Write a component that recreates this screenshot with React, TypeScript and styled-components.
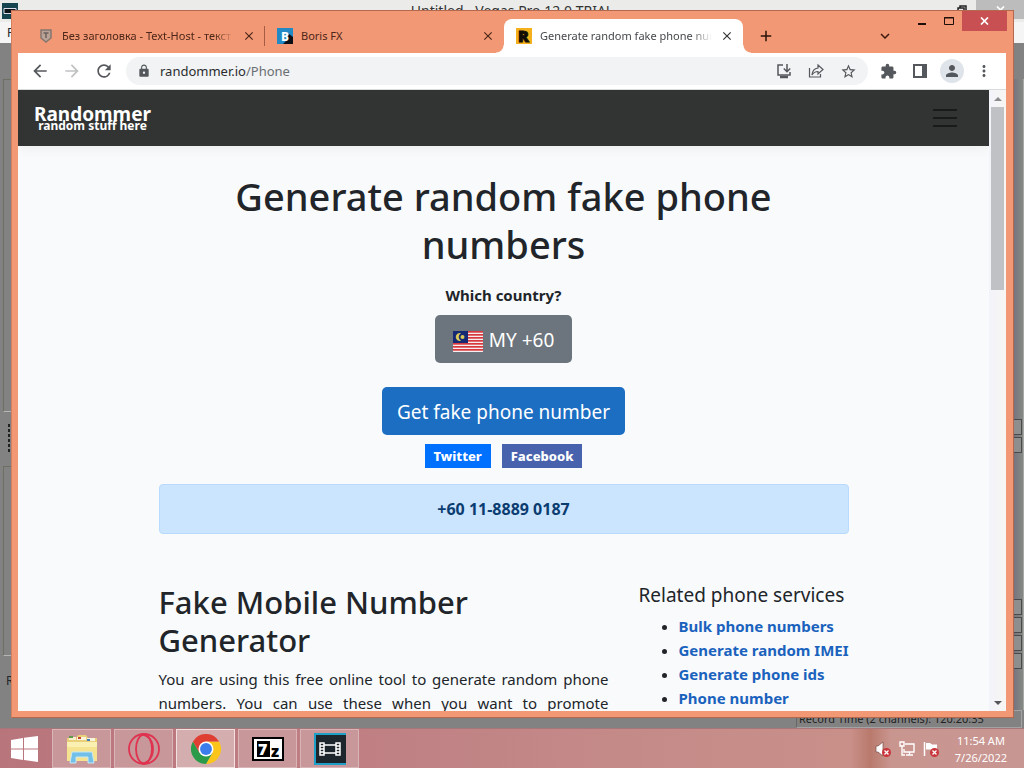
import React from "react";
import styled, { createGlobalStyle } from "styled-components";
import {
  MdArrowBack,
  MdArrowForward,
  MdRefresh,
  MdLock,
  MdStarBorder,
  MdExtension,
  MdPerson,
  MdMoreVert,
  MdAdd,
  MdClose,
  MdKeyboardArrowDown,
} from "react-icons/md";

const GlobalStyle = createGlobalStyle`
  *, *::before, *::after { box-sizing: border-box; }
  html, body, #root { height: 100%; }
  body {
    margin: 0;
    overflow: hidden;
    font-family: "Noto Sans", "Open Sans", sans-serif;
    color: #212529;
  }
  button { font-family: inherit; border: 0; padding: 0; margin: 0; background: none; color: inherit; }
`;

const Desktop = styled.div`
  height: 100vh;
  display: flex;
  flex-direction: column;
`;

const Workspace = styled.div`
  position: relative;
  flex: 1;
  min-height: 0;
  display: flex;
`;

/* ---------- editor window in the background ---------- */

const Editor = styled.div`
  flex: 1;
  min-width: 0;
  display: flex;
  flex-direction: column;
  background: #828282;
  overflow: hidden;
`;

const EditorTitle = styled.div`
  flex: none;
  height: 22px;
  display: grid;
  grid-template-columns: 1fr auto 1fr;
  align-items: center;
  background: #ebebea;
  color: #333;
  font-size: 14px;
  line-height: 22px;
`;

const EditorLogo = styled.svg`
  margin-left: 2px;
`;

const EditorControls = styled.div`
  display: flex;
  justify-content: flex-end;
  gap: 9px;
  align-items: center;
  align-self: start;
`;

const EditorClose = styled.button`
  width: 48px;
  height: 19px;
  background: #bcbcbc;
  color: #fff;
  display: grid;
  place-items: center;
`;

const EditorMenu = styled.div`
  flex: none;
  height: 21px;
  padding: 0 7px;
  background: #f5f5f5;
  font-size: 12px;
  line-height: 21px;
`;

const EditorBody = styled.div`
  flex: 1;
  min-height: 0;
  display: flex;
  justify-content: space-between;
  padding-top: 36px;
`;

const EditorPanels = styled.div`
  width: 40px;
  padding-left: 3px;
  display: flex;
  flex-direction: column;
`;

const EditorPanel = styled.div<{ $height: number }>`
  height: ${(p) => p.$height}px;
  border: 1px solid #6c7062;
  border-bottom-color: #b5b5b5;
`;

const Grip = styled.div`
  height: 30px;
  margin: 12px 0 12px 5px;
  width: 2px;
  background: repeating-linear-gradient(#222 0 3px, transparent 3px 5px);
`;

const EditorLabel = styled.div`
  padding: 16px 0 0 3px;
  font-size: 12px;
`;

const EditorRail = styled.div`
  width: 10px;
  display: flex;
  flex-direction: column;
  border-right: 1px solid #a8a8a8;
  background: linear-gradient(90deg, #77747f, #858a84);
`;

const RailButtons = styled.div<{ $top: number }>`
  margin-top: ${(p) => p.$top}px;
  display: grid;
  gap: 2px;
`;

const RailButton = styled.div`
  height: 16px;
  width: 8px;
  border: 1px solid #4a4a4a;
  border-left: 0;
  background: #8e8e8e;
`;

const EditorStatus = styled.div`
  flex: none;
  display: flex;
  justify-content: flex-end;
  padding: 0 2px 0 0;
  font-size: 11px;
  line-height: 16px;
  color: #222;
`;

const StatusCell = styled.span`
  width: 226px;
  padding-left: 2px;
  border: 1px solid #a3a3a3;
  border-left-color: #666;
`;

/* ---------- browser ---------- */

const Browser = styled.div`
  position: absolute;
  inset: 10px 10px 10px 11px;
  display: flex;
  flex-direction: column;
  padding: 0 7px 6px 6px;
  background: #f29874;
  border: 1px solid #b4694f;
  border-left-color: #d5805f;
`;

const TabBar = styled.div`
  flex: none;
  height: 42px;
  display: flex;
  align-items: flex-end;
  padding-left: 8px;
  margin-right: -1px;
`;

const Tab = styled.div<{ $active?: boolean; $divider?: boolean }>`
  position: relative;
  flex: 0 1 239px;
  min-width: 0;
  height: 34px;
  padding: 0 9px 0 12px;
  display: flex;
  align-items: center;
  gap: 8px;
  border-radius: 8px 8px 0 0;
  background: ${(p) => (p.$active ? "#fff" : "transparent")};
  color: ${(p) => (p.$active ? "#45484c" : "#4c2618")};
  ${(p) =>
    p.$divider &&
    `&::after { content: ""; position: absolute; right: 0; top: 7px; height: 20px; width: 1px; background: #a45c42; }`}
  ${(p) =>
    p.$active &&
    `&::before, &::after {
       content: ""; position: absolute; bottom: 0; width: 8px; height: 8px;
     }
     &::before { left: -8px; background: radial-gradient(circle at 0 0, transparent 7px, #fff 8px); }
     &::after { right: -8px; background: radial-gradient(circle at 100% 0, transparent 7px, #fff 8px); }`}
`;

const TabTitle = styled.span<{ $fade?: boolean }>`
  flex: 1;
  min-width: 0;
  overflow: hidden;
  white-space: nowrap;
  font-size: 11px;
  line-height: 16px;
  ${(p) => p.$fade && `mask-image: linear-gradient(90deg, #000 88%, transparent);`}
`;

const IconButton = styled.button<{ $size?: number; $color?: string }>`
  flex: none;
  width: ${(p) => p.$size ?? 24}px;
  height: ${(p) => p.$size ?? 24}px;
  display: grid;
  place-items: center;
  color: ${(p) => p.$color ?? "#54575b"};
`;

const TabActions = styled.div`
  flex: 1;
  height: 34px;
  display: flex;
  justify-content: space-between;
  align-items: center;
  padding: 0 11px;
`;

const WindowControls = styled.div`
  align-self: flex-start;
  display: flex;
`;

const WindowButton = styled.button<{ $close?: boolean }>`
  width: ${(p) => (p.$close ? 45 : 27)}px;
  height: 20px;
  display: grid;
  place-items: center;
  background: ${(p) => (p.$close ? "#c85052" : "transparent")};
`;

const Toolbar = styled.div`
  flex: none;
  height: 37px;
  display: flex;
  align-items: center;
  gap: 8px;
  padding: 0 10px;
  background: #fff;
  border-bottom: 1px solid #d9dbdc;
`;

const NavButtons = styled.div`
  display: flex;
  gap: 8px;
`;

const Omnibox = styled.div`
  flex: 1;
  min-width: 0;
  height: 28px;
  display: flex;
  align-items: center;
  padding: 0 8px 0 11px;
  margin-left: 2px;
  border-radius: 14px;
  background: #f1f3f4;
  color: #54575b;
`;

const Address = styled.div`
  flex: 1;
  margin-left: 9px;
  font-size: 13px;
  line-height: 20px;
  color: #6b6e72;
`;

const Host = styled.span`
  color: #2a2c2f;
`;

const OmniActions = styled.div`
  display: flex;
  gap: 8px;
`;

const ToolbarActions = styled.div`
  display: flex;
  gap: 8px;
`;

const Avatar = styled(IconButton)`
  border-radius: 50%;
  background: #dfe3ea;
`;

const Viewport = styled.div`
  flex: 1;
  min-height: 0;
  display: flex;
  background: #f9fbfd;
`;

const Scrollbar = styled.div`
  flex: none;
  width: 17px;
  display: flex;
  flex-direction: column;
  align-items: center;
  background: linear-gradient(90deg, #f3f3fb, #f7f6f2);
`;

const ScrollThumb = styled.div`
  width: 13px;
  flex: 0 1 183px;
  background: #c0c1c4;
`;

const ScrollArrow = styled.button<{ $end?: boolean }>`
  width: 17px;
  height: 17px;
  display: grid;
  place-items: center;
  margin-top: ${(p) => (p.$end ? "auto" : 0)};
  color: ${(p) => (p.$end ? "#55555a" : "#8b8b90")};
`;

/* ---------- web page ---------- */

const Page = styled.div`
  flex: 1;
  min-width: 0;
  overflow: hidden;
  background: #f8fafc;
  font-size: 15px;
  line-height: 24px;
`;

const SiteNav = styled.nav`
  height: 56px;
  display: flex;
  align-items: center;
  justify-content: space-between;
  padding: 0 29px 0 16px;
  background: #323433;
  box-shadow: 0 2px 12px rgba(0, 0, 0, 0.06);
`;

const Brand = styled.a`
  display: flex;
  flex-direction: column;
  align-items: center;
  padding-top: 3px;
  color: #fff;
  text-decoration: none;
  font-weight: 700;
`;

const BrandName = styled.span`
  font-size: 19px;
  line-height: 12px;
`;

const BrandTagline = styled.span`
  font-size: 12px;
  line-height: 12px;
`;

const Container = styled.main`
  max-width: 720px;
  margin: 0 auto;
  padding: 26px 15px 0;
  text-align: center;
`;

const Title = styled.h1`
  margin: 0 0 15px;
  font-size: 38px;
  line-height: 48px;
  font-weight: 500;
`;

const CountryLabel = styled.label`
  display: block;
  font-weight: 700;
  margin-bottom: 8px;
`;

const LargeButton = styled.button<{ $primary?: boolean }>`
  display: flex;
  align-items: center;
  gap: 6px;
  height: 48px;
  margin: 0 auto ${(p) => (p.$primary ? 9 : 24)}px;
  padding: 2px ${(p) => (p.$primary ? 15 : 18)}px 0;
  border-radius: 5px;
  background: ${(p) => (p.$primary ? "#1b6ec2" : "#6c757d")};
  color: #fff;
  font-size: 19px;
  line-height: 30px;
`;

const Flag = styled.svg`
  margin-top: 2px;
`;

const ShareRow = styled.div`
  display: flex;
  justify-content: center;
  gap: 11px;
  margin-bottom: 16px;
`;

const ShareLink = styled.a<{ $color: string }>`
  height: 24px;
  padding: 0 9px;
  background: ${(p) => p.$color};
  color: #fff;
  font-size: 13px;
  line-height: 24px;
  font-weight: 800;
  text-decoration: none;
`;

const Result = styled.div`
  padding: 12px 20px;
  border: 1px solid #b8daff;
  border-radius: 4px;
  background: #cce5ff;
  color: #0b3c70;
  font-size: 16px;
  font-weight: 700;
  margin-bottom: 49px;
`;

const Columns = styled.div`
  display: grid;
  grid-template-columns: 450px 1fr;
  gap: 30px;
  text-align: left;
`;

const SectionTitle = styled.h2`
  margin: 0 0 8px;
  font-size: 31px;
  line-height: 38px;
  font-weight: 500;
`;

const Paragraph = styled.p`
  margin: 0;
  text-align: justify;
`;

const AsideTitle = styled.h5`
  margin: 0 0 7px;
  font-size: 19px;
  line-height: 24px;
  font-weight: 400;
  white-space: nowrap;
`;

const ServiceList = styled.ul`
  margin: 0;
  padding-left: 40px;
`;

const ServiceLink = styled.a`
  color: #1a62bd;
  font-weight: 700;
  text-decoration: none;
  white-space: nowrap;
`;

/* ---------- taskbar ---------- */

const Taskbar = styled.div`
  flex: none;
  height: 40px;
  display: flex;
  gap: 3px;
  background: linear-gradient(90deg, #b9757c 0, #bf7f83 35%, #c48a88 60%, #c9908a 83%, #b97a6c 85%, #c9958f 87%, #c89692 100%);
  border-top: 1px solid #a5767a;
`;

const StartButton = styled.button`
  width: 49px;
  display: grid;
  place-items: center;
`;

const TaskButton = styled.button<{ $active?: boolean }>`
  width: 59px;
  display: grid;
  place-items: center;
  border: 1px solid ${(p) => (p.$active ? "#f3e1e1" : "#d9b5b7")};
  background: ${(p) => (p.$active ? "#d4adae" : "#c79799")};
`;

const Tray = styled.div`
  margin-left: auto;
  display: flex;
  align-items: center;
  gap: 8px;
  padding-right: 17px;
  color: #fff;
`;

const Clock = styled.time`
  margin-left: 8px;
  text-align: center;
  font-size: 11px;
  line-height: 17px;
`;

const services = ["Bulk phone numbers", "Generate random IMEI", "Generate phone ids", "Phone number"];

const ShieldIcon = () => (
  <svg width="16" height="16" viewBox="0 0 16 16">
    <path d="M3 2h10v8l-5 4-5-4z" fill="#b9a396" stroke="#85766f" strokeWidth="1.500" />
    <path d="M5.500 5h5M8 5v5" stroke="#6d625d" strokeWidth="1.500" />
  </svg>
);

const BorisIcon = () => (
  <svg width="16" height="16" viewBox="0 0 16 16">
    <rect width="16" height="16" fill="#2389c4" />
    <path d="M12 6l4 3v7H6l3-3z" fill="#0b0f16" />
    <text x="4" y="13" fontSize="12" fontWeight="800" fill="#fff">B</text>
  </svg>
);

const RockstarIcon = () => (
  <svg width="16" height="16" viewBox="0 0 16 16">
    <rect width="16" height="16" fill="#f5b11d" />
    <text x="2" y="14" fontSize="16" fontWeight="900" fill="#120d04" stroke="#120d04">R</text>
  </svg>
);

const CrossIcon = ({ color = "#fff" }: { color?: string }) => (
  <svg width="9" height="8" viewBox="0 0 9 8">
    <path d="M1 .5l7 7M8 .5l-7 7" stroke={color} strokeWidth="1.700" />
  </svg>
);

const InstallIcon = () => (
  <svg width="16" height="16" viewBox="0 0 16 16" fill="none" stroke="currentColor" strokeWidth="1.500">
    <path d="M7 2H2v10h12V9" />
    <path d="M4 14h8" strokeWidth="2.500" />
    <path d="M11 1v7M7.800 5.500L11 8.700l3.200-3.200" />
  </svg>
);

const ShareIcon = () => (
  <svg width="16" height="16" viewBox="0 0 16 16" fill="none" stroke="currentColor" strokeWidth="1.200">
    <path d="M1.500 5v9h11v-3" />
    <path d="M10 2l5 4.500-5 4.500V8.500C7 8.500 5.500 9.500 4 12c.3-4 2.500-6.500 6-7z" />
  </svg>
);

const PanelIcon = () => (
  <svg width="14" height="14" viewBox="0 0 14 14">
    <path d="M0 0h14v14H0zM2 2v10h7V2z" fill="currentColor" fillRule="evenodd" />
  </svg>
);

const MalaysiaFlag = () => (
  <Flag width="30" height="21" viewBox="0 0 30 21" role="img" aria-label="Malaysia">
    <rect width="30" height="21" fill="#f6eeee" />
    {[0, 3, 6, 9, 12, 15, 18].map((y) => (
      <rect key={y} y={y} width="30" height="1.700" fill="#d8393f" />
    ))}
    <rect width="15" height="12" fill="#152a72" />
    <path d="M8 2.200a4 4 0 1 0 0 7.600a4.300 4.300 0 0 1 0-7.600z" fill="#d9c95a" />
    <circle cx="9.500" cy="6" r="2" fill="#d9c95a" />
  </Flag>
);

const WindowsIcon = () => (
  <svg width="28" height="26" viewBox="0 0 28 26" fill="#fff">
    <path d="M0 4l12-2v10.500H0zM13 1.800L27 0v12.500H13zM0 13.500h12V24L0 22zM13 13.500h14V26l-14-2z" />
  </svg>
);

const FolderIcon = () => (
  <svg width="32" height="30" viewBox="0 0 32 30">
    <path d="M1 4h9l2-3h8l2 3h9v23H1z" fill="#e9cf78" />
    <path d="M3 3h7v3H3z" fill="#f6efc9" />
    <path d="M3 2h4v2H3z" fill="#5e9a4c" />
    <path d="M11 3h9v3h-9zM21 4h8v3h-8z" fill="#f9f4de" />
    <path d="M12 3h3v2h-3z" fill="#c8472f" />
    <path d="M21 5h3v2h-3z" fill="#3f7fb5" />
    <path d="M1 8h30v19H1z" fill="#f5e38f" />
    <path d="M1 8h30v5H1z" fill="#faf0b2" />
    <path d="M6 18h20l2 11h-6v-6H10v6H4z" fill="#72bfe8" stroke="#c8e8f7" />
  </svg>
);

const OperaIcon = () => (
  <svg width="32" height="32" viewBox="0 0 32 32" fill="none" stroke="#df3350" strokeWidth="1.800">
    <circle cx="16" cy="16" r="15" />
    <ellipse cx="16" cy="16" rx="8" ry="14.500" />
    <path d="M14 1.500c7 1 11 7 11 14.500s-4 13.500-11 14.500" />
  </svg>
);

const ChromeIcon = () => (
  <svg width="30" height="30" viewBox="0 0 48 48">
    <path d="M44.800 12A24 24 0 0 1 24 48L34.400 30 24 12z" fill="#fbc51c" />
    <path d="M3.200 12A24 24 0 0 0 24 48L34.400 30H13.600z" fill="#2b9a49" />
    <path d="M3.200 12A24 24 0 0 1 44.800 12H24L13.600 30z" fill="#df3e32" />
    <circle cx="24" cy="24" r="12" fill="#fff" />
    <circle cx="24" cy="24" r="9.500" fill="#3b7ded" />
  </svg>
);

const SevenZipIcon = () => (
  <svg width="32" height="24" viewBox="0 0 32 24">
    <rect width="32" height="24" fill="#000" />
    <rect x="2" y="2" width="28" height="20" fill="#fff" />
    <rect x="5" y="4" width="13" height="16" fill="#000" />
    <text x="6" y="18" fontSize="16" fontWeight="900" fill="#fff">7</text>
    <text x="19" y="20" fontSize="16" fontWeight="900" fill="#000">z</text>
  </svg>
);

const VegasIcon = () => (
  <svg width="32" height="32" viewBox="0 0 32 32">
    <rect width="32" height="32" fill="#1fa0c9" />
    <rect x="2" y="2" width="30" height="28" fill="#1c262c" />
    <path d="M6 10h4v12H6zM22 10h4v12h-4zM10 12h12v8H10z" fill="none" stroke="#fff" strokeWidth="1.500" />
    <path d="M6 13h4M6 16h4M6 19h4M22 13h4M22 16h4M22 19h4" stroke="#fff" strokeWidth="1.300" />
  </svg>
);

const Badge = () => (
  <>
    <circle cx="11.500" cy="11.500" r="4.500" fill="#c9353b" />
    <path d="M9.500 9.500l4 4M13.500 9.500l-4 4" stroke="#fff" strokeWidth="1.300" />
  </>
);

const SpeakerIcon = () => (
  <svg width="16" height="16" viewBox="0 0 16 16">
    <path d="M1 5h2l5-4v14l-5-4H1z" fill="#fff" stroke="#7a4a48" strokeWidth=".7" />
    <Badge />
  </svg>
);

const NetworkIcon = () => (
  <svg width="16" height="16" viewBox="0 0 16 16" fill="none" stroke="#fff" strokeWidth="1.400">
    <path d="M6 3h9v8H5V8M7 14h7M10.500 11v3" />
    <path d="M1 1h4v4H1zM3 5v9h3" />
  </svg>
);

const FlagIcon = () => (
  <svg width="16" height="16" viewBox="0 0 16 16">
    <path d="M1.500 1v14" stroke="#fff" strokeWidth="1.500" />
    <path d="M3 2h4l2 1.500h5V10H9L7 8.500H3z" fill="#fff" />
    <Badge />
  </svg>
);

export default function App() {
  return (
    <Desktop>
      <GlobalStyle />
      <Workspace>
        <Editor>
          <EditorTitle>
            <EditorLogo width="16" height="16" viewBox="0 0 32 32">
              <rect width="32" height="32" fill="#16454f" />
              <path d="M4 11h24v10H4z" fill="#0c1417" stroke="#dde" strokeWidth="2" />
            </EditorLogo>
            <span>Untitled - Vegas Pro 12.0 TRIAL</span>
            <EditorControls>
              <svg width="10" height="10" viewBox="0 0 10 10" fill="none" stroke="#222" strokeWidth="1.500">
                <path d="M3 3V1h6v6H7M1 3h6v6H1z" />
              </svg>
              <EditorClose aria-label="Close editor"><CrossIcon /></EditorClose>
            </EditorControls>
          </EditorTitle>
          <EditorMenu>File</EditorMenu>
          <EditorBody>
            <EditorPanels>
              <EditorPanel $height={333} />
              <Grip />
              <EditorPanel $height={190} />
              <EditorLabel>Rate</EditorLabel>
            </EditorPanels>
            <EditorRail>
              <RailButtons $top={340}><RailButton /><RailButton /></RailButtons>
              <RailButtons $top={146}><RailButton /><RailButton /><RailButton /><RailButton /></RailButtons>
            </EditorRail>
          </EditorBody>
          <EditorStatus>
            <StatusCell>Record Time (2 channels): 120:20:35</StatusCell>
          </EditorStatus>
        </Editor>

        <Browser>
          <TabBar>
            <Tab $divider>
              <ShieldIcon />
              <TabTitle $fade>Без заголовка - Text-Host - текст</TabTitle>
              <IconButton $size={14} $color="#4c2618" aria-label="Close tab"><MdClose size={14} /></IconButton>
            </Tab>
            <Tab>
              <BorisIcon />
              <TabTitle>Boris FX</TabTitle>
              <IconButton $size={14} $color="#4c2618" aria-label="Close tab"><MdClose size={14} /></IconButton>
            </Tab>
            <Tab $active>
              <RockstarIcon />
              <TabTitle $fade>Generate random fake phone numbers</TabTitle>
              <IconButton $size={14} $color="#333" aria-label="Close tab"><MdClose size={14} /></IconButton>
            </Tab>
            <TabActions>
              <IconButton $color="#2a130a" aria-label="New tab"><MdAdd size={18} /></IconButton>
              <IconButton $color="#3a1a0e" aria-label="Search tabs"><MdKeyboardArrowDown size={18} /></IconButton>
            </TabActions>
            <WindowControls>
              <WindowButton aria-label="Minimize">
                <svg width="8" height="12" viewBox="0 0 8 12"><path d="M0 8h8v2H0z" fill="#1e0e08" /></svg>
              </WindowButton>
              <WindowButton aria-label="Maximize">
                <svg width="10" height="8" viewBox="0 0 10 8"><path d="M.5.5h9v7h-9zM0 1h10" fill="none" stroke="#1e0e08" /></svg>
              </WindowButton>
              <WindowButton $close aria-label="Close"><CrossIcon /></WindowButton>
            </WindowControls>
          </TabBar>

          <Toolbar>
            <NavButtons>
              <IconButton aria-label="Back"><MdArrowBack size={20} /></IconButton>
              <IconButton $color="#bfc1c3" aria-label="Forward"><MdArrowForward size={20} /></IconButton>
              <IconButton aria-label="Reload"><MdRefresh size={20} /></IconButton>
            </NavButtons>
            <Omnibox>
              <MdLock size={14} />
              <Address><Host>randommer.io</Host>/Phone</Address>
              <OmniActions>
                <IconButton aria-label="Install"><InstallIcon /></IconButton>
                <IconButton aria-label="Share"><ShareIcon /></IconButton>
                <IconButton aria-label="Bookmark"><MdStarBorder size={17} /></IconButton>
              </OmniActions>
            </Omnibox>
            <ToolbarActions>
              <IconButton aria-label="Extensions"><MdExtension size={17} /></IconButton>
              <IconButton aria-label="Side panel"><PanelIcon /></IconButton>
              <Avatar aria-label="Profile"><MdPerson size={18} /></Avatar>
              <IconButton aria-label="Menu"><MdMoreVert size={18} /></IconButton>
            </ToolbarActions>
          </Toolbar>

          <Viewport>
            <Page>
              <SiteNav>
                <Brand href="#home">
                  <BrandName>Randommer</BrandName>
                  <BrandTagline>random stuff here</BrandTagline>
                </Brand>
                <IconButton $size={30} $color="#191a1a" aria-label="Toggle navigation">
                  <svg width="24" height="20" viewBox="0 0 24 20">
                    <path d="M0 2h24M0 10h24M0 18h24" stroke="currentColor" strokeWidth="2" />
                  </svg>
                </IconButton>
              </SiteNav>
              <Container>
                <Title>Generate random fake phone numbers</Title>
                <CountryLabel htmlFor="country">Which country?</CountryLabel>
                <LargeButton id="country"><MalaysiaFlag />MY +60</LargeButton>
                <LargeButton $primary>Get fake phone number</LargeButton>
                <ShareRow>
                  <ShareLink href="#twitter" $color="#0070ff">Twitter</ShareLink>
                  <ShareLink href="#facebook" $color="#4862ad">Facebook</ShareLink>
                </ShareRow>
                <Result>+60 11-8889 0187</Result>
                <Columns>
                  <section>
                    <SectionTitle>Fake Mobile Number Generator</SectionTitle>
                    <Paragraph>
                      You are using this free online tool to generate random phone numbers. You can use these when
                      you want to promote something online.
                    </Paragraph>
                  </section>
                  <aside>
                    <AsideTitle>Related phone services</AsideTitle>
                    <ServiceList>
                      {services.map((s) => (
                        <li key={s}><ServiceLink href="#service">{s}</ServiceLink></li>
                      ))}
                    </ServiceList>
                  </aside>
                </Columns>
              </Container>
            </Page>
            <Scrollbar>
              <ScrollArrow aria-label="Scroll up">
                <svg width="8" height="4" viewBox="0 0 8 4"><path d="M0 4l4-4 4 4z" fill="currentColor" /></svg>
              </ScrollArrow>
              <ScrollThumb />
              <ScrollArrow $end aria-label="Scroll down">
                <svg width="8" height="4" viewBox="0 0 8 4"><path d="M0 0l4 4 4-4z" fill="currentColor" /></svg>
              </ScrollArrow>
            </Scrollbar>
          </Viewport>
        </Browser>
      </Workspace>

      <Taskbar>
        <StartButton aria-label="Start"><WindowsIcon /></StartButton>
        <TaskButton aria-label="File Explorer"><FolderIcon /></TaskButton>
        <TaskButton aria-label="Opera"><OperaIcon /></TaskButton>
        <TaskButton $active aria-label="Chrome"><ChromeIcon /></TaskButton>
        <TaskButton aria-label="7-Zip"><SevenZipIcon /></TaskButton>
        <TaskButton aria-label="Vegas Pro"><VegasIcon /></TaskButton>
        <Tray>
          <SpeakerIcon />
          <NetworkIcon />
          <FlagIcon />
          <Clock>11:54 AM<br />7/26/2022</Clock>
        </Tray>
      </Taskbar>
    </Desktop>
  );
}
